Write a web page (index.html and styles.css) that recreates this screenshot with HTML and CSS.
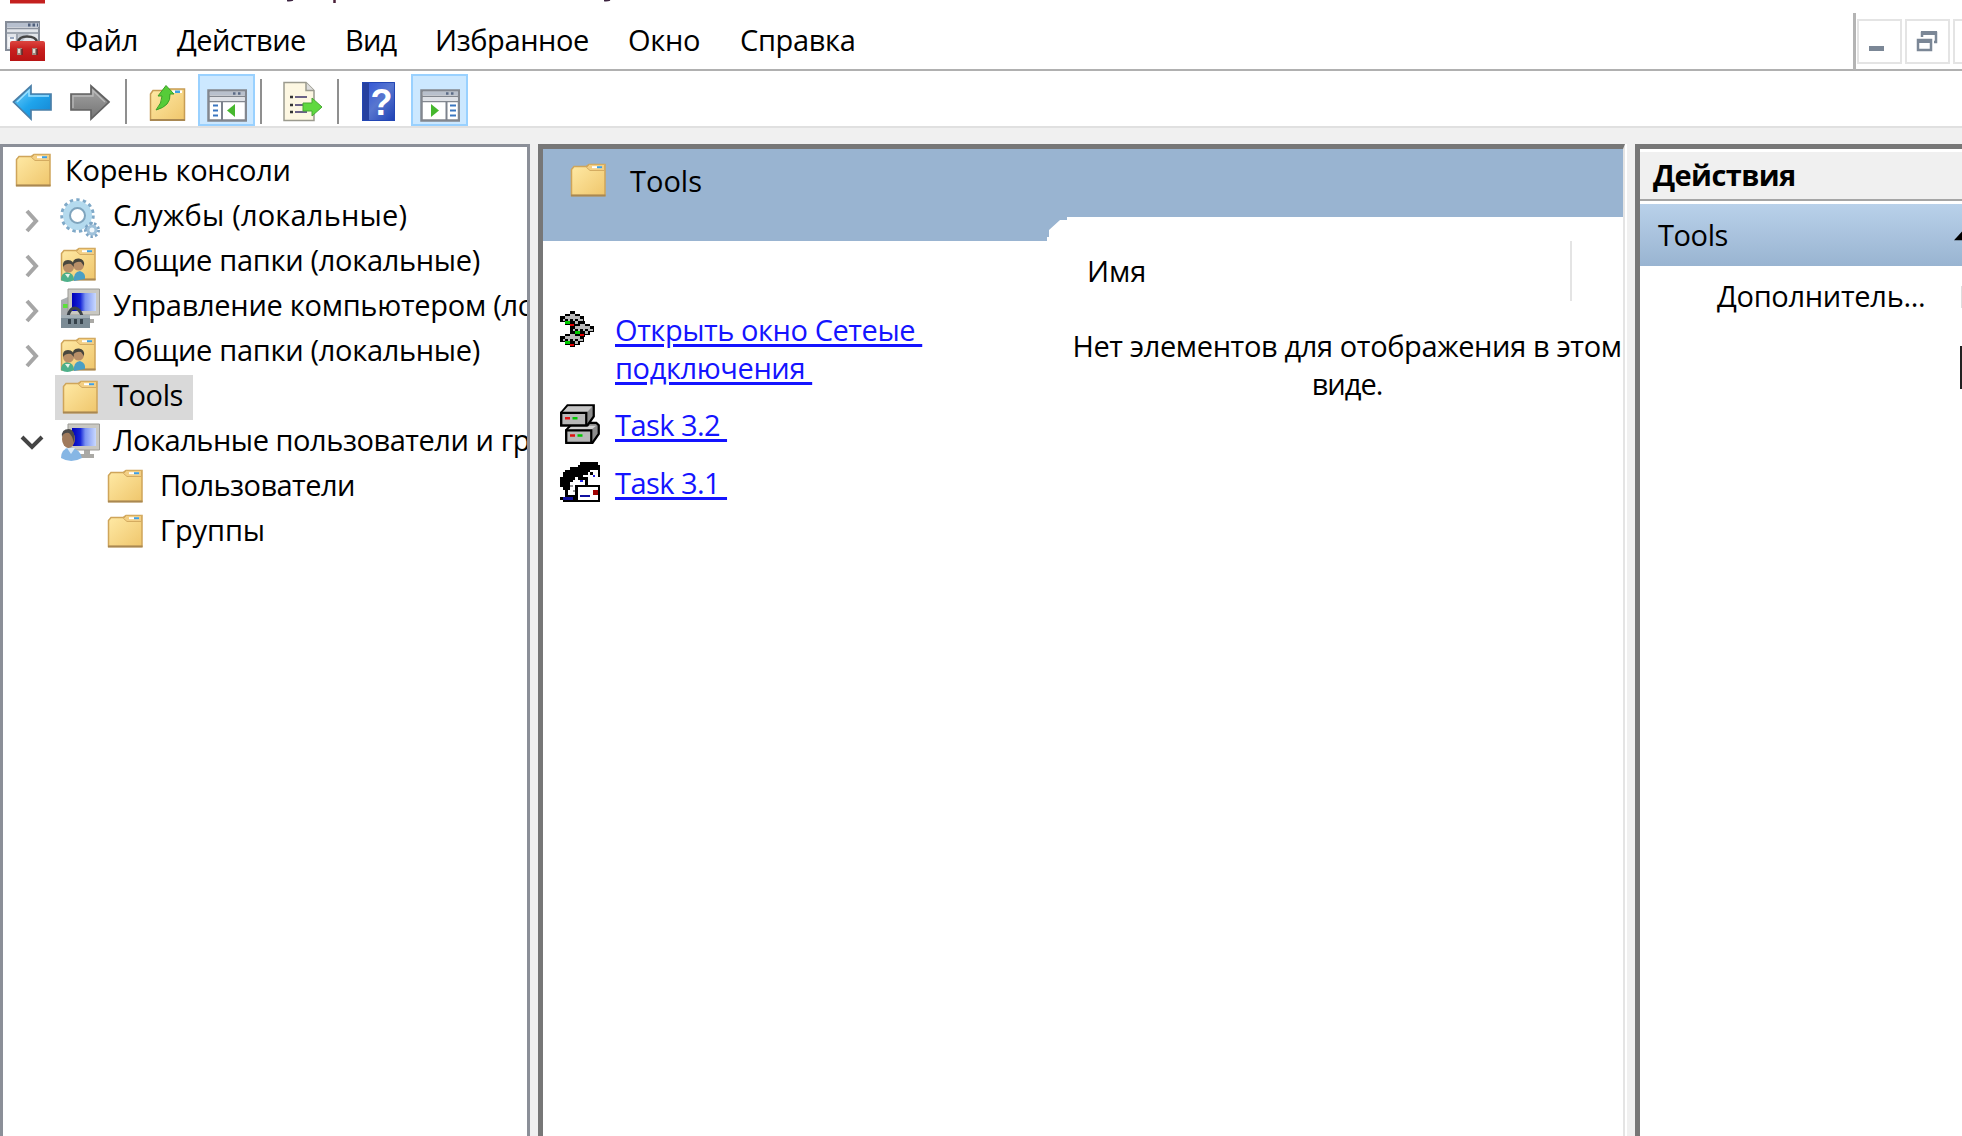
FILE: index.html
```html
<!DOCTYPE html>
<html lang="ru">
<head>
<meta charset="utf-8">
<title>Консоль</title>
<link rel="stylesheet" href="styles.css">
</head>
<body>
<svg class="defs" width="0" height="0">
  <defs>
    <linearGradient id="gFolder" x1="0" y1="0" x2="1" y2="1"><stop offset="0" stop-color="#ffeaa6"/><stop offset="1" stop-color="#efc66c"/></linearGradient>
    <linearGradient id="gBlue" x1="0" y1="0" x2="1" y2="1"><stop offset="0" stop-color="#7bd3fb"/><stop offset=".5" stop-color="#1fa4ec"/><stop offset="1" stop-color="#1583cf"/></linearGradient>
    <linearGradient id="gGrey" x1="0" y1="0" x2="0" y2="1"><stop offset="0" stop-color="#a4a4a4"/><stop offset="1" stop-color="#757575"/></linearGradient>
    <linearGradient id="gScreen" x1="0" y1="0" x2="1" y2="0"><stop offset="0" stop-color="#0000b8"/><stop offset=".35" stop-color="#1726d8"/><stop offset=".55" stop-color="#7a92f2"/><stop offset="1" stop-color="#c8d8ff"/></linearGradient>
    <linearGradient id="gHelp" x1="0" y1="0" x2="1" y2="1"><stop offset="0" stop-color="#2a50d8"/><stop offset=".5" stop-color="#5876cf"/><stop offset="1" stop-color="#1c3fb4"/></linearGradient>
    <linearGradient id="gRed" x1="0" y1="0" x2="0" y2="1"><stop offset="0" stop-color="#dc4640"/><stop offset=".4" stop-color="#c9201f"/><stop offset="1" stop-color="#b81414"/></linearGradient>
  </defs>
  <symbol id="folder" viewBox="0 0 40 40">
    <path d="M1.500 32.500V6.500L4 3.500H16L19 1.500H35V32.500Z" fill="url(#gFolder)" stroke="#cfa55a" stroke-width="1.500"/>
    <path d="M16.500 4.500L19.500 1.500H34.500V7.500H20Z" fill="#f3cf84" stroke="#d4ab60"/>
    <path d="M22 3.200H32V5.200H22Z" fill="#fff"/><path d="M27 3.200H32V5.200H27Z" fill="#3f9fe0"/>
    <path d="M1 32.500H35.500" stroke="#a98852" stroke-width="2"/>
  </symbol>
  <symbol id="shared" viewBox="0 0 40 40">
    <use href="#folder" width="40" height="40"/>
    <path d="M14 34Q13 25 20 24Q26 26 25 32Z" fill="#4a9fc5"/>
    <circle cx="18.500" cy="18" r="5.500" fill="#b98f68"/><path d="M13 18Q12 11 19 11.500Q25 12 24 19L21 15Q16 14 13 18Z" fill="#46443c"/>
    <path d="M1 33Q1 26 7 25Q14 26 14 33Q7 37 1 33Z" fill="#4eb08a"/><path d="M5 27L8 31L10 27Z" fill="#e8f2e8"/>
    <circle cx="8.500" cy="20" r="5.500" fill="#b98f68"/><path d="M3 20Q2 13 8 13Q14 13 14 20L11 17Q6 16 3 20Z" fill="#4a473e"/>
  </symbol>
  <symbol id="monitor" viewBox="0 0 40 40">
    <path d="M24 27H30V31H34V35H20V31H24Z" fill="#aaa9a5"/>
    <path d="M8 1H39.500V27H8Z" fill="#c9c8c2" stroke="#9b9a95"/>
    <path d="M12 5H36V23H12Z" fill="url(#gScreen)"/>
  </symbol>
  <symbol id="gears" viewBox="0 0 40 40">
    <circle cx="17.500" cy="17.500" r="15.500" fill="none" stroke="#7fa9c8" stroke-width="3.500" stroke-dasharray="3.300 3.190"/>
    <circle cx="17.500" cy="17.500" r="11" fill="none" stroke="#b4daee" stroke-width="7"/>
    <circle cx="17.500" cy="17.500" r="7.500" fill="#fff" stroke="#7fa4bd" stroke-width="2"/>
    <circle cx="32" cy="32" r="6.500" fill="none" stroke="#7da4c4" stroke-width="3" stroke-dasharray="2.400 2.140"/>
    <circle cx="32" cy="32" r="4" fill="#eef6fb" stroke="#9fc1da" stroke-width="3"/>
  </symbol>
  <symbol id="window" viewBox="0 0 40 40">
    <path d="M1.500 8.500H39V38.500H1.500Z" fill="#fff" stroke="#82878f" stroke-width="2.500"/>
    <path d="M3 9.500H38V13.500H3Z" fill="#b8c0cc"/><path d="M26 11.500H36" stroke="#5b6b85" stroke-width="2.500" stroke-dasharray="2.500 2.500"/>
    <path d="M2 14.500H39M2 19.500H39" stroke="#82878f" stroke-width="1.700"/><path d="M3 15.500H38V18.500H3Z" fill="#dde1e7"/>
  </symbol>
</svg>

<header class="menubar">
  <svg class="title-rest" viewBox="0 0 700 5" width="700" height="5">
    <path d="M10 0H45V3.500H10Z" fill="#c4201f"/><path d="M287 0.500Q290 1 293 0M604 .5Q607 1 610 0" stroke="#3c2440" stroke-width="1.500" fill="none"/><path d="M334.500 0V3" stroke="#4a2038" stroke-width="2.500"/>
  </svg>
  <svg class="icon app" viewBox="0 0 40 40">
    <path d="M1 1H34V29H1Z" fill="#e2e5ea" stroke="#858c98" stroke-width="2"/>
    <path d="M2 2H34V6H2Z" fill="#b6bfce"/><path d="M23 4H33" stroke="#50607c" stroke-width="3" stroke-dasharray="2.500 2"/>
    <path d="M1 7.500H34M1 12H34M12 13V28" stroke="#8b929e" stroke-width="1.500"/><path d="M13 13H24L14 24Z" fill="#c0c6cf"/><path d="M3 16H10V26H3Z" fill="#f4f5f7"/><path d="M5 17H9" stroke="#7b8dad" stroke-width="1.500"/>
    <path d="M13 21Q14 15.500 22 15.500Q31 15.500 32 21" fill="none" stroke="#444" stroke-width="2.500"/>
    <path d="M5 22Q5 20 7 20H38Q40 20 40 22V40H5Z" fill="url(#gRed)"/>
    <path d="M12 27H17V34H12ZM27 27H32V34H27Z" fill="#a08a80"/><path d="M13 28H15V32H13ZM28 28H30V32H28Z" fill="#e6ddd4"/><path d="M17 28V34M32 28V34" stroke="#5c2a28" stroke-width="1.500"/>
  </svg>
  <nav class="menu">
    <span class="t m1">Файл</span><span class="t m2">Действие</span><span class="t m3">Вид</span><span class="t m4">Избранное</span><span class="t m5">Окно</span><span class="t m6">Справка</span>
  </nav>
  <div class="mdi">
    <span class="mdi-btn"><svg viewBox="0 0 44 44"><path d="M12 27H27V32H12Z" fill="#7b8796"/></svg></span>
    <span class="mdi-btn"><svg viewBox="0 0 44 44"><path d="M17 18V14H31V23H29" fill="none" stroke="#7b8796" stroke-width="2.500"/><path d="M16 12H32V16H16ZM12 20H27V24H12Z" fill="#7b8796"/><path d="M13 21H26V31H13Z" fill="none" stroke="#7b8796" stroke-width="2.500"/></svg></span>
    <span class="mdi-btn"></span>
  </div>
</header>

<div class="toolbar">
  <span class="tool"><svg class="icon" viewBox="0 0 40 40"><path d="M1.500 20L19 4V12H39V28H19V37Z" fill="url(#gBlue)" stroke="#4b7fa8" stroke-width="1.700"/><path d="M5 20L17 8.500V14H37" fill="none" stroke="#9ce0ff" stroke-width="1.500"/></svg></span>
  <span class="tool"><svg class="icon" viewBox="0 0 40 40"><path d="M39 20L21 4V12H1V28H21V37Z" fill="url(#gGrey)" stroke="#626262" stroke-width="1.700"/><path d="M3 26V14H23V8.500L35 20" fill="none" stroke="#bbb" stroke-width="1.300"/></svg></span>
  <span class="sep s1"></span>
  <span class="tool t1"><svg class="icon" viewBox="0 0 40 40"><path d="M2.500 38V12L5 8.500H19L22 7H36.500V38Z" fill="url(#gFolder)" stroke="#c79d54" stroke-width="1.500"/><path d="M24 8.500H34V11H24Z" fill="#fff"/><path d="M27 8.500H32V11H27Z" fill="#3f9fe0"/><path d="M2 38H37" stroke="#a98852" stroke-width="2"/><path d="M18 3.500L26 12H22Q23 24 8 28Q14 21 14 14H10Z" fill="#56cc38" stroke="#3aa027"/></svg></span>
  <span class="tool on"><svg class="icon" viewBox="0 0 40 40"><use href="#window" width="40" height="40"/><path d="M15 20V38" stroke="#7c828c" stroke-width="2"/><path d="M6 23.500H11M6 28.500H11M6 33.500H11" stroke="#3a76c0" stroke-width="2"/><path d="M28 22V35L20 28.500Z" fill="#46b82e"/></svg></span>
  <span class="sep s2"></span>
  <span class="tool t2"><svg class="icon" viewBox="0 0 40 40"><path d="M2 0.500H24L32 8.500V38.500H2Z" fill="#fdf7e2" stroke="#9b9a8e" stroke-width="1.500"/><path d="M24 .5V8.500H32" fill="#ddd" stroke="#9b9a8e" stroke-width="1.500"/><path d="M8 15H11M8 23H11M8 30H11" stroke="#333" stroke-width="2.500"/><path d="M13 15H25M13 23H22M13 30H25" stroke="#6b6287" stroke-width="2"/><path d="M21 21H30V16L40 25L30 34V29H21Z" fill="#5fd93f" stroke="#48a934"/></svg></span>
  <span class="sep s3"></span>
  <span class="tool t3"><svg class="icon" viewBox="0 0 40 40"><path d="M4 0H37V39H4Z" fill="url(#gHelp)"/><path d="M4 0H11V39H4Z" fill="#26409f"/><path d="M4.500 .5H36.500V38.500H4.500Z" fill="none" stroke="#2346b4"/><text x="23.500" y="33" class="q">?</text></svg></span>
  <span class="tool on t4"><svg class="icon" viewBox="0 0 40 40"><use href="#window" width="40" height="40"/><path d="M26.500 20V38" stroke="#7c828c" stroke-width="2"/><path d="M30 23.500H36M30 28.500H36M30 33.500H36" stroke="#3a76c0" stroke-width="2"/><path d="M11 22V35L19 28.500Z" fill="#46b82e"/></svg></span>
</div>

<main class="panes">
  <section class="tree">
    <div class="row root"><svg class="icon"><use href="#folder"/></svg><span class="t r1">Корень консоли</span></div>
    <div class="row"><svg class="chev" viewBox="0 0 16 24"><path d="M2 2L11 12L2 22"/></svg><svg class="icon"><use href="#gears"/></svg><span class="t r2">Службы (локальные)</span></div>
    <div class="row"><svg class="chev" viewBox="0 0 16 24"><path d="M2 2L11 12L2 22"/></svg><svg class="icon"><use href="#shared" y="4"/></svg><span class="t r3">Общие папки (локальные)</span></div>
    <div class="row"><svg class="chev" viewBox="0 0 16 24"><path d="M2 2L11 12L2 22"/></svg><svg class="icon" viewBox="0 0 40 40"><path d="M1 12L8 9V28H1Z" fill="#a9adb0"/><path d="M3 16H9V20H3Z" fill="#5ce03a"/><use href="#monitor" width="40" height="40"/><path d="M8 28Q10 20 15 20Q20 21 22 28" fill="none" stroke="#3b4248" stroke-width="3"/><path d="M1 27H30V40H1Z" fill="#7b8b95"/><path d="M1 27H30V30H1Z" fill="#a3afb6"/><path d="M8 31H11V36H8ZM14 31H17V36H14ZM20 31H23V36H20Z" fill="#36424b"/></svg><span class="t r4">Управление компьютером (ло</span></div>
    <div class="row"><svg class="chev" viewBox="0 0 16 24"><path d="M2 2L11 12L2 22"/></svg><svg class="icon"><use href="#shared" y="4"/></svg><span class="t r3">Общие папки (локальные)</span></div>
    <div class="row leaf"><span class="selected"><svg class="icon"><use href="#folder" y="2"/></svg><span class="t r5">Tools</span></span></div>
    <div class="row open"><svg class="chev down" viewBox="0 0 24 16"><path d="M2 2L12 12L22 2"/></svg><svg class="icon" viewBox="0 0 40 40"><use href="#monitor" width="40" height="40"/><path d="M1 35Q1 26 10 24Q20 26 22 35Q11 41 1 35Z" fill="#86b6e4"/><path d="M7 25L11 31L15 25Z" fill="#dcebf8"/><ellipse cx="8.500" cy="16" rx="6.500" ry="9" fill="#a07a5c"/><path d="M2 14Q1 6 9 6Q16 7 14 20Q12 12 9 10Q4 9 2 14Z" fill="#4c4a49"/></svg><span class="t r6">Локальные пользователи и гр</span></div>
    <div class="row child"><svg class="icon"><use href="#folder" y="1"/></svg><span class="t r7">Пользователи</span></div>
    <div class="row child"><svg class="icon"><use href="#folder" y="1"/></svg><span class="t r8">Группы</span></div>
  </section>

  <section class="center">
    <div class="banner"><svg class="icon"><use href="#folder"/></svg><span class="t c1">Tools</span></div>
    <div class="work">
      <div class="tasks">
        <div class="task first">
          <svg class="icon" viewBox="0 0 16 16" shape-rendering="crispEdges">
            <g id="hub">
              <path d="M4 0H6V1H8V2H9.500V4.500H8V5.500H6V6.500H4V5.500H2V4.500H0V2H2V1H4Z" fill="#000"/>
              <path d="M4 1H6V2H4ZM2 2H8V3H2ZM1 3H2V4H1ZM3 3H4V4H3ZM5 3H6V4H5ZM7 3H9V4H7ZM6 4H7V5H6Z" fill="#b9b9b9"/>
              <path d="M2 4H4V5H2Z" fill="#00c800"/><path d="M4 5H5.500V6H4Z" fill="#e00000"/>
            </g>
            <use href="#hub" x="4" y="4"/><use href="#hub" y="8"/>
          </svg>
          <span class="link"><span class="t l1">Открыть окно Сетеые&nbsp;</span><br><span class="t l2">подключения&nbsp;</span></span>
        </div>
        <div class="task">
          <svg class="icon" viewBox="0 0 16 16">
            <path d="M2.500 10.500L5 7.500H14.500L15.500 8.500V12L13 15.500H3L2.500 15Z" fill="#8c8c8c" stroke="#000" stroke-width=".9"/><path d="M3 10.300L5 8.700H14.500L12.500 10.300Z" fill="#d2d2d2"/><path d="M2.500 10.500H12.500V15.500H2.500Z" fill="#b8b8b8" stroke="#000" stroke-width=".9"/><path d="M4 12.100H6V13.100H4Z" fill="#e01010"/><path d="M7 12.100H9V13.100H7Z" fill="#00c800"/>
            <path d="M.5 3.500L3 .5H13.500V5L11 8.500H.5Z" fill="#8c8c8c" stroke="#000" stroke-width=".9"/><path d="M.9 3.400L3.200 .9H13L10.700 3.400Z" fill="#c6c6c6"/><path d="M.5 3.500H10.500V8.500H.5Z" fill="#b8b8b8" stroke="#000" stroke-width=".9"/><path d="M2 5.200H4V6.200H2Z" fill="#e01010"/><path d="M5 5.200H7V6.200H5Z" fill="#00c800"/>
          </svg>
          <span class="link"><span class="t l3">Task 3.2&nbsp;</span></span>
        </div>
        <div class="task">
          <svg class="icon" viewBox="0 0 16 16" shape-rendering="crispEdges">
            <path d="M0 6H1V4H2V3H4V2H7V1H8V0H15V1H16V16H1V15H0V14H2V11H1V10H0Z" fill="#000"/>
            <path d="M6 6H9V5H11V4H12V3H15V5H16V9H6V13H3V11H4V8H5V7H6Z" fill="#fff"/>
            <path d="M8 7H9V8H8ZM13 5H14V6H13Z" fill="#2222e8"/><path d="M6 5H8V6H10V7H7V6H6ZM12 4H13V5H12ZM10 6H11V9H10ZM15 5H16V6H15Z" fill="#000"/>
            <path d="M4 9H5V10H4ZM5 11H6V12H5Z" fill="#999"/><path d="M6 9H16V16H6Z" fill="#000"/><path d="M7 10H15V15H7Z" fill="#fff"/>
            <path d="M13 11H15V13H13Z" fill="#a00000"/><path d="M8 13H12V14H8ZM1 14H5V15H1Z" fill="#1010a0"/>
          </svg>
          <span class="link"><span class="t l3">Task 3.1&nbsp;</span></span>
        </div>
      </div>
      <div class="list">
        <div class="list-head"><span class="t c2">Имя</span></div>
        <p class="empty"><span class="t c3">Нет элементов для отображения в этом</span><br><span class="t c4">виде.</span></p>
      </div>
    </div>
  </section>

  <aside class="actions">
    <div class="actions-head"><span class="t a1">Действия</span></div>
    <div class="actions-group"><span class="t a2">Tools</span><svg class="up" viewBox="0 0 10 12"><path d="M0 12L10 1V12Z" fill="#000"/></svg></div>
    <div class="actions-item"><span class="t a3">Дополнитель...</span><i class="hint"></i></div>
    <i class="cursor"></i>
  </aside>
</main>
</body>
</html>
```
FILE: styles.css
```css
* { box-sizing: border-box; }
body { margin: 0; width: 1962px; height: 1136px; overflow: hidden; background: #fff; color: #000; font: 29px/36px "Open Sans", "Noto Sans", sans-serif; display: flex; flex-direction: column; }
.defs { position: absolute; }
.t { white-space: nowrap; }
.icon { width: 40px; height: 40px; flex: none; display: block; overflow: visible; }

.menubar { height: 71px; flex: none; display: flex; align-items: flex-start; border-bottom: 2px solid #b0b0b0; position: relative; }
.title-rest { position: absolute; left: 0; top: 0; }
.app { margin: 21px 0 0 5px; }
.menu { display: flex; padding: 22px 0 0 20px; flex: 1; }
.menu .t { flex: none; }
.m1 { width: 112px; letter-spacing: -.3px; }
.m2 { width: 168px; letter-spacing: -.6px; }
.m3 { width: 90px; letter-spacing: -.8px; }
.m4 { width: 193px; letter-spacing: -.4px; }
.m5 { width: 112px; letter-spacing: -.3px; }
.m6 { letter-spacing: -.35px; }
.mdi { width: 109px; height: 57px; margin-top: 13px; border-left: 3px solid #b4b4b4; display: flex; gap: 3px; padding: 6px 0 0 1px; overflow: hidden; }
.mdi-btn { width: 45px; height: 45px; border: 2px solid #e4e4e4; flex: none; }
.mdi-btn svg { display: block; width: 44px; height: 44px; margin: -2px; }

.toolbar { height: 57px; flex: none; display: flex; gap: 1px; padding: 3px 0 0 3px; border-bottom: 2px solid #e0e0e0; }
.tool { width: 57px; height: 52px; padding: 8px 0 0 9px; flex: none; }
.tool.on { background: #cce8ff; border: 2px solid #99d1ff; padding: 6px 0 0 7px; }
.sep { width: 2px; height: 45px; background: #8f8f8f; margin-top: 5px; flex: none; }
.s1 { margin-left: 6px; }
.t1 { margin-left: 11px; margin-right: 1px; }
.s2 { margin-left: 4px; }
.t2 { margin-left: 10px; }
.s3 { margin-left: 6px; }
.t3 { margin-left: 9px; }
.t4 { margin-left: 4px; }
.q { font: bold 36px "Liberation Sans", sans-serif; fill: #fff; text-anchor: middle; }

.panes { flex: 1; min-height: 0; background: #f0f0f0; padding-top: 16px; display: flex; }
.tree { width: 530px; flex: none; background: #fff; border: 3px solid #8b8f98; border-bottom: 0; padding-top: 3px; overflow: hidden; }
.row { height: 45px; display: flex; align-items: center; padding-left: 22px; }
.row .t { margin: -5px 0 0 13px; }
.row.root { padding-left: 12px; }
.row.root .t { margin-left: 10px; }
.chev { width: 16px; height: 24px; margin: 6px 19px 0 0; flex: none; fill: none; stroke: #a6a6a6; stroke-width: 4; }
.row.leaf { padding-left: 52px; }
.selected { height: 45px; width: 138px; background: #d9d9d9; display: flex; align-items: center; padding-left: 7px; }
.row.open { padding-left: 17px; }
.chev.down { width: 24px; height: 16px; margin: 0 16px 0 0; stroke: #444; }
.row.child { padding-left: 104px; }
.r1 { letter-spacing: -.25px; }
.r2 { letter-spacing: .2px; }
.r3 { letter-spacing: -.3px; }
.r4 { letter-spacing: -.28px; }
.row .r5 { letter-spacing: -.4px; margin-left: 11px; }
.r6 { letter-spacing: -.45px; }
.r7 { letter-spacing: -.55px; }
.r8 { letter-spacing: -.1px; }

.center { width: 1087px; margin-left: 8px; flex: none; background: #fff; border-top: 5px solid #777; border-left: 5px solid #777; border-right: 2px solid #e4e4e4; box-shadow: 2px 0 #fff; display: flex; flex-direction: column; }
.banner { height: 92px; flex: none; background: #99b4d1; display: flex; align-items: flex-start; padding: 14px 0 0 27px; }
.c1 { margin-left: 20px; }
.work { flex: 1; display: flex; }
.tasks { width: 504px; flex: none; padding: 70px 0 0 17px; }
.task { display: flex; align-items: flex-start; height: 58px; }
.task.first { height: 93px; }
.link { margin-left: 15px; line-height: 38px; color: #1414ff; padding-top: 2px; }
.first .link { padding-top: 0; }
.link .t { text-decoration: underline; text-decoration-thickness: 2.500px; text-underline-offset: 3px; }
.l1 { letter-spacing: -.43px; }
.l2 { letter-spacing: -.4px; }
.l3 { letter-spacing: -.55px; }
.list { flex: 1; min-width: 0; margin-top: -24px; background: #fff; padding-top: 24px; clip-path: polygon(0 24px, 0 20px, 2px 20px, 2px 13px, 13px 3px, 20px 3px, 20px 0, 100% 0, 100% 100%, 0 100%); }
.list-head { width: 525px; height: 60px; border-right: 2px solid #e4e4e4; padding: 12px 0 0 40px; }
.empty { margin: 26px 0 0 24px; text-align: center; line-height: 38px; }
.c3 { letter-spacing: -.37px; }
.c4 { letter-spacing: -1px; }

.actions { flex: 1; min-width: 0; margin-left: 10px; background: #fff; border-top: 5px solid #777; border-left: 5px solid #777; overflow: hidden; position: relative; }
.actions-head { height: 52px; background: #f0f0f0; border-top: 3px solid #fff; border-bottom: 2px solid #a5a5a5; padding: 5px 0 0 13px; font-weight: 700; }
.actions-group { height: 62px; margin-top: 3px; background: linear-gradient(#b9d1ea, #99b4d1); display: flex; justify-content: space-between; align-items: center; padding-left: 18px; }
.up { width: 8px; height: 11px; }
.actions-item { display: flex; justify-content: space-between; padding: 12px 0 0 77px; }
.a1 { letter-spacing: -.6px; }
.a2 { letter-spacing: -.4px; }
.a3 { letter-spacing: -.3px; }
.hint { width: 1px; height: 22px; background: #ddd; margin-top: 8px; }
.cursor { position: absolute; right: 0; top: 197px; width: 2px; height: 43px; background: #222; }
```
